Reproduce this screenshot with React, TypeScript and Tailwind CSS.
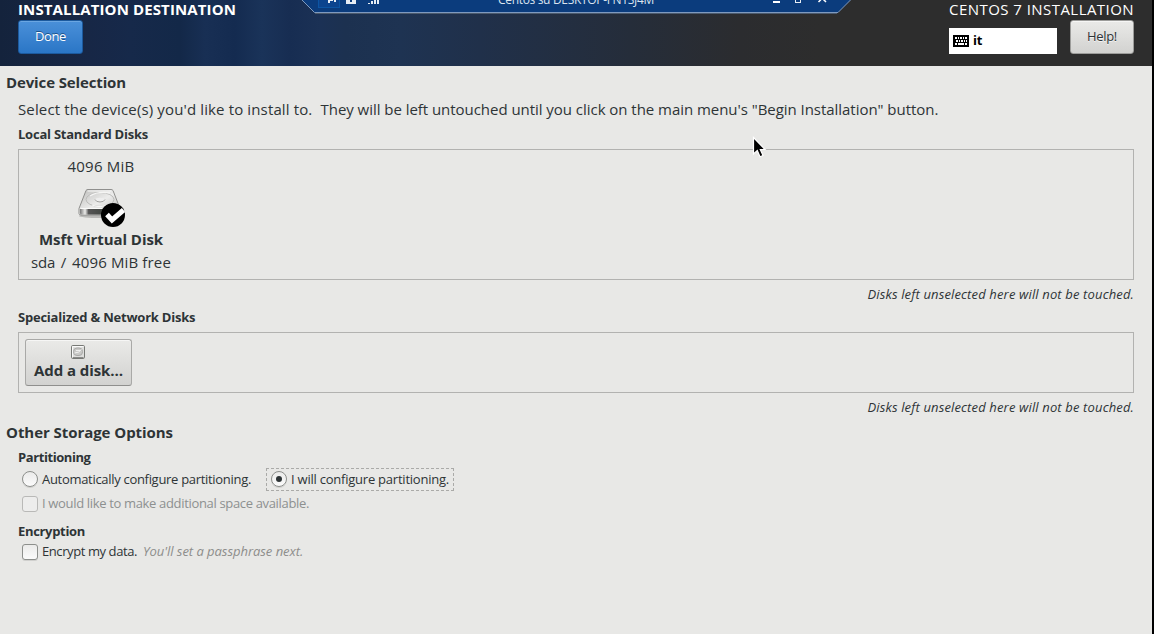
import type { ReactNode } from 'react';

function Keyboard() {
  return (
    <svg className="h-3 w-4 shrink-0" viewBox="0 0 16 12" shapeRendering="crispEdges">
      <rect width="16" height="12" rx="1" fill="#000" />
      <path fill="#fff" d="M2 2h2v2H2zM5 2h1v2H5zM7 2h2v2H7zM10 2h1v2h-1zM12 2h2v2h-2zM3 5h2v2H3zM6 5h1v2H6zM8 5h2v2H8zM11 5h1v2h-1zM13 5h1v2h-1zM2 8h2v2H2zM5 8h6v2H5zM12 8h2v2h-2z" />
    </svg>
  );
}

function HardDisk() {
  return (
    <svg className="h-[44px] w-[50px]" viewBox="0 0 50 44">
      <defs>
        <linearGradient id="top" x1="0" y1="0" x2="1" y2="1">
          <stop offset="0" stopColor="#bcbcba" />
          <stop offset="0.5" stopColor="#ececeb" />
          <stop offset="1" stopColor="#b5b5b3" />
        </linearGradient>
        <linearGradient id="front" x1="0" y1="0" x2="1" y2="0">
          <stop offset="0" stopColor="#777" />
          <stop offset="0.13" stopColor="#ededeb" />
          <stop offset="0.22" stopColor="#555" />
          <stop offset="0.7" stopColor="#3d423d" />
          <stop offset="1" stopColor="#b5b5b3" />
        </linearGradient>
      </defs>
      <ellipse cx="24" cy="32" rx="21" ry="2" fill="#b9b9b7" />
      <path d="M3 24.500L10 6.500Q10.600 5.500 12 5.500H35Q36.400 5.500 37 6.500L44 24.500V30Q44 31 43 31H5Q3 31 3 29.500Z" fill="url(#top)" stroke="#8f8f8d" />
      <path d="M4 25H43V29.500Q43 30.500 42 30.500H5.500Q4 30.500 4 29Z" fill="url(#front)" />
      <path d="M4.500 24.500H43" stroke="#fafaf9" />
      <path d="M11.500 7H35.500" stroke="#f7f7f6" />
      <ellipse cx="24" cy="15.500" rx="14" ry="7" fill="none" stroke="#bcbcba" />
      <path d="M14 12Q22 7 34 9M16 21Q26 25 36 19" fill="none" stroke="#f5f5f4" strokeWidth="1.300" />
      <ellipse cx="24" cy="15.500" rx="4.500" ry="1.800" fill="#eee" />
      <path d="M19 15.500Q20 18 24 18Q28 18 29 15.500" fill="none" stroke="#a0a09e" />
      <circle cx="37" cy="31" r="12" fill="#000" />
      <path d="M31 30.500L36 36L47.500 26" fill="none" stroke="#fff" strokeWidth="5" />
    </svg>
  );
}

function SmallDisk() {
  return (
    <svg className="h-[14px] w-[14px]" viewBox="0 0 14 14">
      <rect x="0.500" y="0.500" width="13" height="13" rx="1.200" fill="#dededc" stroke="#777975" />
      <path d="M1.500 12V1.500H12.500" fill="none" stroke="#fafafa" />
      <rect x="2.500" y="3" width="9" height="7.500" rx="3.500" fill="#c9c9c7" stroke="#aaaaa8" />
      <path d="M3.500 8Q8 8 10.500 4.500M5 5.500H9" fill="none" stroke="#f0f0ef" />
      <path d="M2 12.500H12.500" stroke="#8a8a88" />
    </svg>
  );
}

function ConnectionBar() {
  return (
    <div className="absolute top-0 left-[301px] h-[14px] w-[550px] overflow-hidden">
      <svg className="absolute inset-0 h-[14px] w-[550px]" viewBox="0 0 550 14">
        <path d="M0.500 -0.500L13.500 12.500H537L550 -0.500Z" fill="#0b3c7d" stroke="#7f9abf" />
        <path d="M14 13.500H536" stroke="#4c5a6c" />
        <g shapeRendering="crispEdges">
          <path d="M17.500 -1V7.500H38.500V-1Z" fill="#0c448e" stroke="#0c55a4" />
          <path d="M27 0h2v3h-2zM29 0h3v1h-3zM33 0h2v2h-2zM45 0h10v4h-10zM67 3h2v1h-2zM70 1h2v3h-2zM73 0h2v4h-2zM76 0h2v4h-2z" fill="#e7edf4" />
          <path d="M49 0h2v2h-2z" fill="#0b3c7d" />
          <path d="M472 1h7v2h-7z" fill="#fff" />
          <path d="M494.500 -2V2.500H499.500V-2" fill="none" stroke="#e7edf4" />
        </g>
        <path d="M517.500 2L523.500 -4M525 2L519 -4" stroke="#fff" strokeWidth="1.500" />
      </svg>
      <div className="absolute -top-[8px] left-[197px] font-['Open_Sans',sans-serif] text-[12px] leading-4 tracking-[-0.323px] whitespace-nowrap text-[#dbe4ef]">
        Centos su DESKTOP-FN1SJ4M
      </div>
    </div>
  );
}

function Pointer() {
  return (
    <svg className="absolute top-[136px] left-[751px] h-[23px] w-[16px]" viewBox="0 0 16 23">
      <path d="M2.500 1.500V18L6.300 14.500L9 20.700L12 19.500L9.300 13.500H14Z" fill="#000" stroke="#fff" strokeWidth="1.200" />
    </svg>
  );
}

function Section({ children }: { children: ReactNode }) {
  return <h2 className="pl-[6px] text-[15px] leading-5 font-bold">{children}</h2>;
}

function Box({ disabled }: { disabled?: boolean }) {
  return (
    <span
      className={
        disabled
          ? 'mb-px h-4 w-4 shrink-0 rounded-[3px] border border-[#b9b9b7] bg-[#ededec]'
          : 'mb-px h-4 w-4 shrink-0 rounded-[3px] border border-[#8d8f8c] bg-linear-to-b from-[#ebebea] to-[#fbfbfb] shadow-[0_1px_0_#d0d0ce]'
      }
    />
  );
}

function Radio({ checked }: { checked?: boolean }) {
  return (
    <span className="mb-px flex h-4 w-4 shrink-0 items-center justify-center rounded-full border border-[#8d8f8c] bg-linear-to-b from-[#ebebea] to-[#fbfbfb] shadow-[0_1px_0_#d0d0ce]">
      {checked && <span className="h-[6px] w-[6px] rounded-full bg-[#2e3436]" />}
    </span>
  );
}

export default function App() {
  return (
    <div className="relative flex h-[634px] w-[1154px] flex-col overflow-hidden border-r-2 border-black bg-[#e8e8e6] font-['Open_Sans',sans-serif] text-[13px] whitespace-nowrap text-[#2e3436]">
      <header className="flex h-[66px] shrink-0 justify-between bg-[linear-gradient(90deg,#14233c_0px,#172746_90px,#16294a_130px,#132848_180px,#182f54_205px,#142b50_235px,#1a3359_262px,#172d52_290px,#1b3155_320px,#1c3150_345px,#1e3352_400px,#20304a_480px,#252d3a_630px,#2b2c2f_740px,#2d2d2d_820px)] pr-[18px] pl-[18px] text-white">
        <div className="flex flex-col">
          <h1 className="h-5 text-[15px] leading-[19px] font-bold tracking-[0.117px]">INSTALLATION DESTINATION</h1>
          <button className="h-[34px] w-[65px] rounded-[3px] border border-[#1c5a9e] bg-linear-to-b from-[#4a90d9] to-[#2a76c6] pb-px tracking-[-0.383px] shadow-[inset_0_1px_0_#6aa6e2] [text-shadow:0_-1px_0_#1c5187]">
            Done
          </button>
        </div>
        <div className="flex w-[185px] flex-col">
          <div className="h-5 text-[15px] leading-[19px] tracking-[0.45px]">CENTOS 7 INSTALLATION</div>
          <div className="flex justify-between">
            <div className="mt-2 flex h-[26px] w-[108px] items-center gap-1 bg-white pl-1 font-bold tracking-[-0.313px] text-black">
              <Keyboard />
              it
            </div>
            <button className="h-[34px] w-[64px] rounded-[3px] border border-[#9c9c9a] bg-linear-to-b from-[#eaeae8] to-[#d2d2d0] pb-px tracking-[-0.313px] text-[#2e3436] shadow-[inset_0_1px_0_#f6f6f5] [text-shadow:0_1px_0_#f4f4f4]">
              Help!
            </button>
          </div>
        </div>
      </header>

      <main className="flex flex-col pt-[6px]">
        <div className="tracking-[-0.129px]"><Section>Device Selection</Section></div>
        <div className="flex flex-col pr-[18px] pl-[18px]">
          <p className="mt-[7px] text-[15px] leading-5 tracking-[-0.04px]">
            <span className="tracking-[0.134px]">Select the device(s) you'd like to install to.&nbsp; </span>
            They will be left untouched until you click on the main menu's "Begin Installation" button.
          </p>
          <h3 className="mt-[5px] mb-[5px] leading-5 font-bold tracking-[-0.232px]">Local Standard Disks</h3>
          <div className="flex h-[131px] border border-[#b2b2b0] pl-3">
            <div className="flex w-[140px] flex-col items-center pt-[6px] text-[15px]">
              <div className="leading-5 tracking-[0.229px]">4096 MiB</div>
              <div className="mt-[8px] h-[44px]"><HardDisk /></div>
              <div className="mt-px leading-5 font-bold tracking-[-0.076px]">Msft Virtual Disk</div>
              <div className="mt-[3px] flex w-full justify-between leading-5">
                <span className="tracking-[-0.224px]">sda</span>
                <span>/</span>
                <span className="tracking-[0.147px]">4096 MiB free</span>
              </div>
            </div>
          </div>
          <p className="mt-[4px] self-end leading-5 tracking-[0.145px] italic">Disks left unselected here will not be touched.</p>
          <h3 className="mt-[3px] mb-[5px] leading-5 font-bold tracking-[-0.22px]">{'Specialized & Network Disks'}</h3>
          <div className="h-[61px] border border-[#b2b2b0] pt-[6px] pl-[6px]">
            <button className="flex h-[47px] w-[107px] flex-col items-center rounded-[3px] border border-[#a9a9a7] border-b-[#8f8f8d] bg-linear-to-b from-[#eaeae8] to-[#d2d2d0] pt-[5px] shadow-[inset_0_1px_0_#f6f6f5]">
              <span className="pr-px"><SmallDisk /></span>
              <span className="mt-px text-[15px] leading-5 font-bold tracking-[-0.077px]">Add a disk…</span>
            </button>
          </div>
          <p className="mt-[4px] self-end leading-5 tracking-[0.145px] italic">Disks left unselected here will not be touched.</p>
        </div>

        <div className="mt-[5px] tracking-[-0.056px]"><Section>Other Storage Options</Section></div>
        <div className="flex flex-col pl-[18px]">
          <h3 className="mt-[5px] leading-5 font-bold tracking-[-0.42px]">Partitioning</h3>
          <div className="mt-px flex h-[23px] items-center">
            <label className="flex w-[248px] items-center gap-1 pl-1 tracking-[-0.304px]">
              <Radio />
              Automatically configure partitioning.
            </label>
            <label className="flex h-[23px] w-[188px] items-center gap-1 border border-dashed border-[#aaaaa8] pl-1 tracking-[-0.228px]">
              <Radio checked />
              I will configure partitioning.
            </label>
          </div>
          <label className="mt-[3px] flex h-5 items-center gap-1 pl-1 tracking-[-0.336px] text-[#8d9090]">
            <Box disabled />
            I would like to make additional space available.
          </label>
          <h3 className="mt-[7px] leading-5 font-bold tracking-[-0.325px]">Encryption</h3>
          <label className="mt-px flex h-5 items-center gap-1 pl-1">
            <Box />
            <span className="tracking-[-0.412px]">Encrypt my data.</span>
            <span className="ml-[2px] tracking-[-0.04px] text-[#8d8d8b] italic">You'll set a passphrase next.</span>
          </label>
        </div>
      </main>

      <ConnectionBar />
      <Pointer />
    </div>
  );
}
